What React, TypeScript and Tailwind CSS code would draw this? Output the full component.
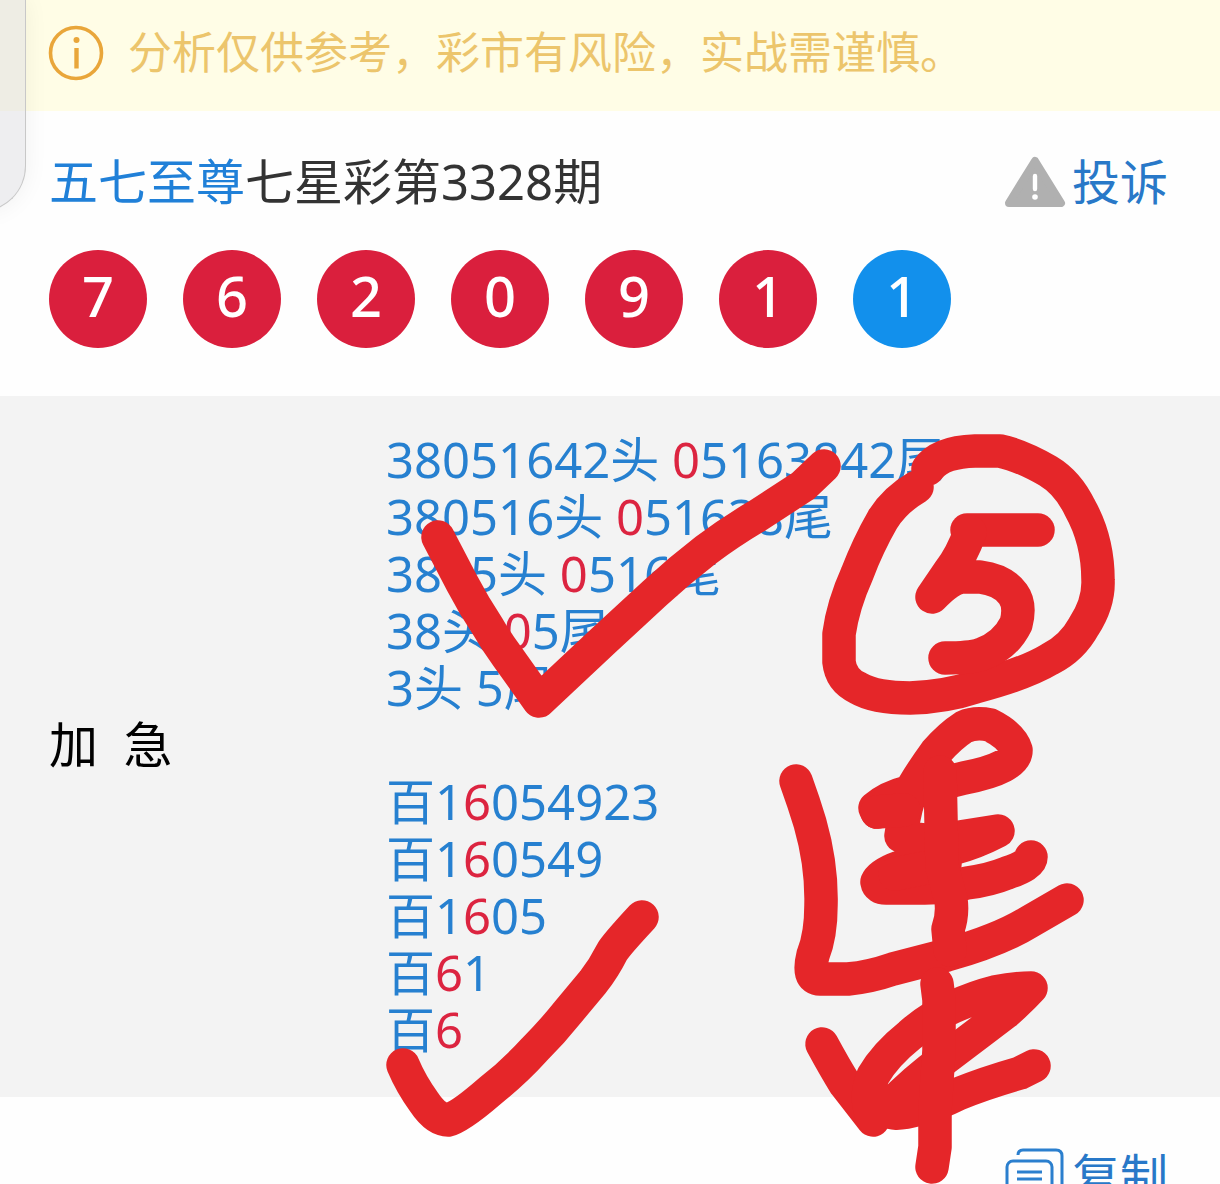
const balls = ["7", "6", "2", "0", "9", "1", "1"];

// each row is: text, hit number, rest
const rows = [
  ["38051642头 ", "0", "5163842尾"],
  ["380516头 ", "0", "51638尾"],
  ["3805头 ", "0", "516尾"],
  ["38头 ", "0", "5尾"],
  ["3头 5尾", "", ""],
  ["", "", ""],
  ["百1", "6", "054923"],
  ["百1", "6", "0549"],
  ["百1", "6", "05"],
  ["百", "6", "1"],
  ["百", "6", ""],
];

const strokes = [
  // big tick
  "M438 537L462 583Q474 606 488 627Q496 641 507 656L539 701L603 641L655 593Q680 570 706 550Q730 532 757 516L803 486L824 466",
  // small tick
  "M403 1065Q411 1084 424 1102Q436 1120 448 1120Q460 1117 490 1091Q514 1072 534 1050Q552 1032 568 1012L593 982Q604 968 612 952Q616 945 642 917",
  // ring
  "M917 487Q895 500 883 519Q868 545 857 574Q843 605 839 634V662Q841 680 858 688Q875 698 910 698Q945 697 975 687Q1025 674 1050 659Q1072 648 1084 626Q1099 603 1098 580Q1098 540 1080 508Q1068 483 1048 471Q1020 455 1000 451H975Q940 452 928 469",
  // 5
  "M967 530H1038",
  "M970 532Q962 555 949 572L932 597Q950 578 962 577H980Q1003 580 1013 594Q1021 605 1016 624Q1005 646 982 654Q972 658 945 658",
  // upper sign
  "M796 781Q804 803 810 823Q822 865 821 905Q821 935 813 955Q807 979 820 979H848Q870 977 893 969L947 955Q1000 940 1029 922L1067 900",
  "M877 812L875 808Q888 797 908 792L964 778Q1016 768 1016 750Q1012 736 990 725Q975 722 964 727Q950 736 936 752Q923 770 914 785Q905 805 901 836Q930 844 960 837L998 831Q975 843 955 848Q925 857 900 867Q880 874 877 882Q878 888 886 888H925Q950 888 967 883Q990 880 1007 873Q1031 865 1031 857",
  "M877 812L904 810",
  "M895 874L945 864",
  "M940 772L942 867L951 900Q953 915 948 929L950 950",
  // lower sign
  "M822 1044Q835 1068 845 1084L873 1120",
  "M873 1118Q864 1098 873 1076Q885 1055 910 1035Q930 1017 953 1007Q975 997 995 992Q1015 988 1031 988Q1020 1000 1005 1013L980 1032L943 1060Q915 1080 888 1108Q888 1118 920 1109Q940 1103 958 1094Q985 1083 1020 1073L1034 1066",
  "M937 984L939 1000V1050L935 1110V1147L932 1167",
];

const InfoIcon = () => (
  <svg className="h-14 w-14 shrink-0" viewBox="0 0 56 56" fill="none">
    <circle cx="28" cy="28" r="25.5" stroke="#e9a63a" strokeWidth="3.6" />
    <circle cx="28.5" cy="15" r="3" fill="#e9a63a" />
    <path d="M28.5 23V43.5" stroke="#e9a63a" strokeWidth="4.4" />
  </svg>
);

const WarnIcon = () => (
  <svg className="h-[52px] w-[62px]" viewBox="0 0 62 52">
    <path
      d="M31 5L57 47H5Z"
      fill="#b0b0b0"
      stroke="#b0b0b0"
      strokeWidth="8"
      strokeLinejoin="round"
    />
    <path d="M31 20V33" stroke="#fff" strokeWidth="4.4" strokeLinecap="round" />
    <circle cx="31" cy="41" r="2.8" fill="#fff" />
  </svg>
);

const CopyIcon = () => (
  <svg
    className="h-[60px] w-[60px]"
    viewBox="0 0 60 60"
    fill="none"
    stroke="#2b7fce"
    strokeWidth="3"
  >
    <path d="M14 10Q14 5 19 5H52Q58 5 58 11V45Q58 50 53 50" />
    <rect x="3" y="16" width="45" height="42" rx="6" />
    <path d="M13 27H38M13 34H38M13 41H38" />
  </svg>
);

export default function App() {
  return (
    <div className="relative h-screen overflow-hidden bg-[#fefefe] font-['Noto_Sans','Noto_Sans_CJK_SC',sans-serif] text-[49px] leading-[57px] text-[#333]">
      <div className="flex items-center gap-6 bg-[#fffde6] pt-6 pb-[30px] pl-12 text-[44px] text-[#ecc56c]">
        <InfoIcon />
        <p>分析仅供参考，彩市有风险，实战需谨慎。</p>
      </div>

      <header className="flex flex-col gap-10 pt-[42px] pr-[52px] pb-12 pl-[49px]">
        <div className="flex items-center justify-between">
          <h1>
            <span className="text-[#2080d8]">五七至尊</span>七星彩第3328期
          </h1>
          <a
            href="#report"
            className="flex items-center gap-1.5 text-5xl leading-[57px] text-[#2878c8]"
          >
            <WarnIcon />
            投诉
          </a>
        </div>
        <ul className="flex gap-9 text-[56px] font-medium text-white">
          {balls.map((ball, i) => (
            <li
              key={i}
              className={`flex size-[98px] items-center justify-center rounded-full pb-2 ${
                i === balls.length - 1 ? "bg-[#1290ec]" : "bg-[#da1f3d]"
              }`}
            >
              {ball}
            </li>
          ))}
        </ul>
      </header>

      <table className="w-full bg-[#f3f3f3] text-left">
        <tbody>
          <tr>
            <th
              scope="row"
              className="w-[386px] pb-1 pl-[49px] align-middle font-normal text-black"
            >
              加&nbsp;&nbsp;急
            </th>
            <td className="pt-[35px] pb-[39px] text-[#2680d0]">
              {rows.map(([start, hit, end], i) => (
                <p key={i} className="min-h-[57px] whitespace-pre">
                  {start}
                  <span className="text-[#dc2440]">{hit}</span>
                  {end}
                </p>
              ))}
            </td>
          </tr>
        </tbody>
      </table>

      <footer className="flex justify-end pt-12 pr-[52px]">
        <button className="flex items-center gap-2 text-5xl leading-[57px] text-[#2878c8]">
          <CopyIcon />
          复制
        </button>
      </footer>

      {/* floating drawer edge */}
      <div className="absolute top-0 -left-5 h-[212px] w-[46px] rounded-br-[46px] border-r border-b border-[#c8c8c8] bg-[#dddde2]/50 shadow-[0_0_24px_rgba(0,0,0,0.06)]" />

      {/* pen marks */}
      <svg
        className="pointer-events-none absolute top-0 left-0 h-[1184px] w-[1220px]"
        viewBox="0 0 1220 1184"
        fill="none"
        stroke="#e52629"
        strokeWidth="33.5"
        strokeLinecap="round"
        strokeLinejoin="round"
      >
        {strokes.map((d) => (
          <path key={d} d={d} />
        ))}
      </svg>
    </div>
  );
}
